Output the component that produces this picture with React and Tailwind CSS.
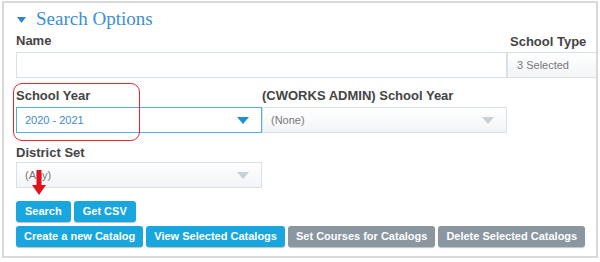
import React from 'react'

const Caret = ({ color }) => (
  <svg width="12" height="7" viewBox="0 0 12 7" className="shrink-0">
    <path d="M0 0 L12 0 L6 7 Z" fill={color} />
  </svg>
)

const Select = ({ value, active, className }) => (
  <div
    className={
      'flex h-[26px] items-center justify-between pl-[8px] pr-[12px] text-[11px] ' +
      (active
        ? 'border border-[#53aee6] bg-white text-[#3d8ccf] '
        : 'border border-[#d8e0ea] bg-gradient-to-b from-white to-[#f2f4f7] text-[#777] ') +
      className
    }
  >
    <span>{value}</span>
    <Caret color={active ? '#1c8fd8' : '#c8d0d8'} />
  </div>
)

const Label = ({ children, className = '' }) => (
  <div className={'text-[13px] font-bold leading-[15px] text-[#444] ' + className}>{children}</div>
)

const Btn = ({ children, gray, wide }) => (
  <button
    className={
      'h-[21px] rounded-[3px] text-[11px] font-bold leading-none text-white shadow-[0_1px_1px_rgba(0,0,0,0.25)] ' +
      (wide ? 'px-[9px] ' : 'px-[8px] ') +
      (gray ? 'bg-[#8a96a0]' : 'bg-[#19a6df]')
    }
  >
    {children}
  </button>
)

export default function App() {
  return (
    <div className="h-[262px] w-[600px] bg-white pl-[2px] pt-[1px]" style={{ fontFamily: '"Liberation Sans", Arial, sans-serif' }}>
      <div className="relative h-[257px] w-[596px] overflow-hidden border-2 border-[#d9d9d9] pl-[12px]">
        <div className="flex items-center pt-[5px]">
          <svg width="9" height="6" viewBox="0 0 9 6" className="ml-[1px] mt-[1px] shrink-0">
            <path d="M0 0 L9 0 L4.5 6 Z" fill="#2d86cc" />
          </svg>
          <span
            className="ml-[10px] text-[19px] leading-[22px] text-[#3b8fd3]"
            style={{ fontFamily: '"Liberation Serif", serif' }}
          >
            Search Options
          </span>
        </div>

        <div className="mt-[3px] flex">
          <div className="w-[491px] shrink-0">
            <Label>Name</Label>
            <div className="mt-[4px] h-[26px] border border-[#d8e0ea] bg-white" />
          </div>
          <div className="w-[100px] shrink-0">
            <Label className="pl-[3px] pt-[1px]">School Type</Label>
            <div className="mt-[3px] flex h-[26px] w-[100px] items-center border border-[#d8e0ea] bg-gradient-to-b from-white to-[#f2f4f7] pl-[9px] text-[11px] text-[#777]">
              3 Selected
            </div>
          </div>
        </div>

        <div className="mt-[10px] flex">
          <div className="w-[246px] shrink-0">
            <Label>School Year</Label>
            <Select value="2020 - 2021" active className="mt-[4px]" />
          </div>
          <div className="w-[245px] shrink-0">
            <Label>(CWORKS ADMIN) School Year</Label>
            <Select value="(None)" className="mt-[4px]" />
          </div>
        </div>

        <div className="mt-[12px] w-[246px]">
          <Label>District Set</Label>
          <Select value="(Any)" className="mt-[2px]" />
        </div>

        <div className="mt-[13px] flex gap-[3px]">
          <Btn wide>Search</Btn>
          <Btn wide>Get CSV</Btn>
        </div>
        <div className="mt-[4px] flex gap-[3px]">
          <Btn>Create a new Catalog</Btn>
          <Btn>View Selected Catalogs</Btn>
          <Btn gray>Set Courses for Catalogs</Btn>
          <Btn gray>Delete Selected Catalogs</Btn>
        </div>

        {/* red annotation: rounded box around School Year */}
        <div className="absolute left-[9px] top-[80px] h-[58px] w-[127px] rounded-[9px] border-[1.5px] border-[#e8262b]" />
        {/* red annotation: arrow pointing to Search */}
        <svg className="absolute left-[28px] top-[167px]" width="14" height="26" viewBox="0 0 14 26">
          <rect x="4.5" y="0" width="5" height="16" fill="#e3121a" />
          <path d="M0 15 L14 15 L7 25 Z" fill="#e3121a" />
        </svg>
      </div>
    </div>
  )
}
